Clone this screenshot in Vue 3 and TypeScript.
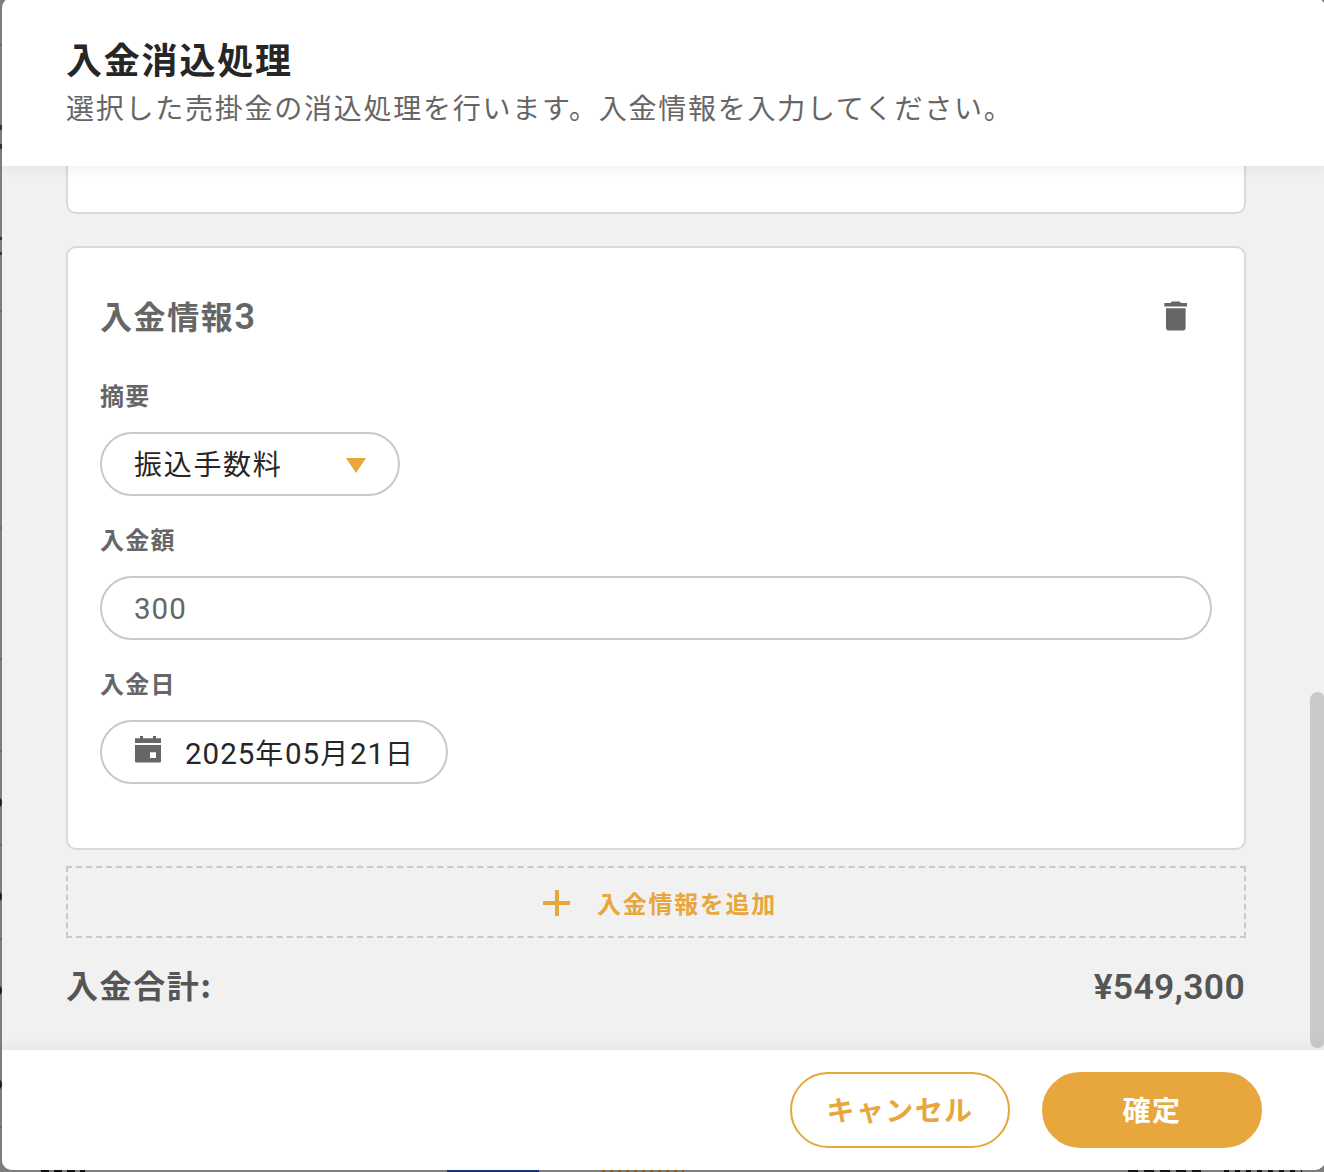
<script setup lang="ts">
import { ref } from 'vue'

interface Deposit {
  index: number
  summary: string
  amount: string
  date: string[]
}

const deposit = ref<Deposit>({
  index: 3,
  summary: '振込手数料',
  amount: '300',
  date: ['2025', '年', '05', '月', '21', '日'],
})
const total = ref('¥549,300')
const isNumeric = (part: string): boolean => /^\d+$/.test(part)
</script>

<template>
  <div class="overlay">
    <div class="behind">
      <i class="rule r1"></i><i class="rule r2"></i><i class="rule r3"></i><i class="rule r4"></i>
      <i class="rule r5"></i><i class="rule r6"></i><i class="rule r7"></i><i class="rule r8"></i>
      <i class="dot d1"></i><i class="dot d2"></i><i class="dot d3"></i><i class="dot d4"></i>
      <i class="tick t1"></i><i class="tick t2"></i><i class="tick t3"></i><i class="tick t4"></i>
      <i class="peek name"></i><i class="peek tag"></i><i class="peek gold"></i>
      <i class="peek memo"></i><i class="peek memo2"></i>
    </div>
    <section class="modal">
      <header class="head">
        <h1>入金消込処理</h1>
        <p>選択した売掛金の消込処理を行います。入金情報を入力してください。</p>
      </header>

      <main class="body">
        <div class="card previous"></div>
        <div class="card">
          <div class="card-head">
            <h2>入金情報<span class="num">{{ deposit.index }}</span></h2>
            <button class="trash" aria-label="削除">
              <svg width="24" height="30" viewBox="0 0 24 30">
                <path fill="#666" d="M.3 2H6.6L7.8 .5H15.6L17 2H23V5.5H.3ZM2 7.2H21.6V26.5Q21.6 29.6 18.6 29.6H5Q2 29.6 2 26.5Z" />
              </svg>
            </button>
          </div>
          <label>摘要</label>
          <div class="field select">
            <span>{{ deposit.summary }}</span>
            <svg width="20" height="15" viewBox="0 0 20 15"><path d="M0 0H20L10 15Z" fill="#e7a73d" /></svg>
          </div>
          <label>入金額</label>
          <div class="field amount"><span class="num">{{ deposit.amount }}</span></div>
          <label>入金日</label>
          <div class="field date">
            <svg width="26" height="27" viewBox="0 0 26 27">
              <path fill="#666" fill-rule="evenodd" d="M0 2.2H5V0H8V2.2H18V0H21V2.2H26V7H0ZM0 9H26V25.5Q26 26.5 25 26.5H1Q0 26.5 0 25.5ZM15 16.2V22H21V16.2Z" />
            </svg>
            <span class="date-text"><span v-for="(part, i) in deposit.date" :key="i" :class="{ num: isNumeric(part) }">{{ part }}</span></span>
          </div>
        </div>

        <button class="add">
          <svg width="28" height="27" viewBox="0 0 28 27"><path d="M14 0V26M0 13H27" stroke="#e7a73d" stroke-width="4" /></svg>
          <span>入金情報を追加</span>
        </button>

        <div class="total">
          <span>入金合計:</span>
          <span class="sum">{{ total }}</span>
        </div>
        <div class="thumb"></div>
      </main>

      <footer class="foot">
        <button class="btn outline">キャンセル</button>
        <button class="btn solid">確定</button>
      </footer>
    </section>
  </div>
</template>

<style>
body {
  margin: 0;
  overflow: hidden;
}
</style>

<style scoped>
* {
  box-sizing: border-box;
}
.overlay {
  position: relative;
  width: 1324px;
  height: 1172px;
  overflow: hidden;
  background: #7d7d7d;
  font-family: 'Noto Sans CJK JP', 'Noto Sans', sans-serif;
  color: #262626;
}
.behind i {
  position: absolute;
  left: 0;
  width: 2px;
}
.rule { height: 2px; background: #6a6a6a; }
.r1 { top: 44px; }
.r2 { top: 310px; }
.r3 { top: 527px; }
.r4 { top: 658px; }
.r5 { top: 750px; }
.r6 { top: 844px; }
.r7 { top: 938px; }
.r8 { top: 1126px; }
.dot { height: 11px; border: 2px solid #222; border-left: 0; border-radius: 0 5px 5px 0; }
.behind .dot { left: -4px; width: 6px; }
.d1 { top: 797px; }
.d2 { top: 891px; }
.d3 { top: 985px; }
.d4 { top: 1079px; }
.tick { height: 5px; background: #333; }
.t1 { top: 125px; }
.t2 { top: 144px; }
.t3 { top: 237px; height: 3px; }
.t4 { top: 252px; height: 3px; }
.behind .peek { top: 1170px; height: 2px; }
.behind .name { left: 41px; width: 44px; background: repeating-linear-gradient(90deg, #111 0 8px, #7d7d7d 8px 13px); }
.behind .tag { left: 447px; width: 92px; background: #18307e; }
.behind .gold { left: 602px; width: 82px; background: repeating-linear-gradient(90deg, #7f5b20 0 3px, #7d7d7d 3px 8px); }
.behind .memo { left: 1128px; width: 73px; background: repeating-linear-gradient(90deg, #161616 0 10px, #7d7d7d 10px 16px); }
.behind .memo2 { left: 1224px; width: 78px; background: repeating-linear-gradient(90deg, #161616 0 5px, #7d7d7d 5px 11px); }

.modal {
  position: relative;
  display: flex;
  flex-direction: column;
  width: 1323px;
  height: 1172px;
  margin: -2px 0 0 2px;
  border-radius: 10px;
  overflow: hidden;
  background: #f1f1f1;
}
.head {
  position: relative;
  z-index: 1;
  flex: none;
  height: 168px;
  padding: 34px 64px 0;
  background: #fff;
  box-shadow: 0 0 16px rgba(0, 0, 0, 0.09);
}
h1 {
  margin: 0;
  font-size: 36px;
  line-height: 52px;
  letter-spacing: 1.8px;
}
.head p {
  margin: 0;
  font-size: 28px;
  line-height: 46px;
  letter-spacing: 1.75px;
  color: #666;
}
.body {
  position: relative;
  flex: none;
  height: 884px;
  padding: 0 79px 0 64px;
}
.card {
  height: 604px;
  padding: 32px;
  border: 2px solid #d9d9d9;
  border-radius: 10px;
  background: #fff;
}
.previous {
  height: 48px;
  margin-bottom: 32px;
  padding: 0;
  border-top: 0;
  border-radius: 0 0 10px 10px;
}
.card-head {
  display: flex;
  justify-content: space-between;
  align-items: center;
  height: 72px;
  padding-right: 24px;
}
h2 {
  margin: -1px 0 0;
  font-size: 32px;
  line-height: 48px;
  letter-spacing: 1.6px;
  color: #666;
}
.num {
  font-family: Roboto, sans-serif;
}
h2 .num {
  font-size: 36px;
  font-weight: 600;
  letter-spacing: 0;
}
.trash {
  display: flex;
  margin: 0;
  padding: 0;
  border: 0;
  background: none;
}
label {
  display: block;
  height: 80px;
  padding-top: 25px;
  font-size: 24px;
  font-weight: 700;
  line-height: 36px;
  letter-spacing: 1.2px;
  color: #666;
}
.field {
  display: flex;
  align-items: center;
  height: 64px;
  padding: 0 32px;
  border: 2px solid #c9c9c9;
  border-radius: 32px;
  font-size: 28px;
  line-height: 40px;
  letter-spacing: 1.7px;
}
.field .num {
  font-size: 29.5px;
  letter-spacing: 1px;
}
.select {
  width: 300px;
  justify-content: space-between;
}
.select span {
  margin-top: -2px;
}
.select svg {
  margin-top: 2px;
}
.amount {
  padding-top: 2px;
  color: #666;
}
.date {
  width: 348px;
  gap: 24px;
  padding-left: 33px;
}
.date svg {
  flex: none;
  margin-top: -6px;
}
.date-text {
  display: block;
  margin-top: 1px;
  white-space: nowrap;
}
.add {
  display: flex;
  align-items: center;
  justify-content: center;
  gap: 26px;
  width: 100%;
  height: 72px;
  margin-top: 16px;
  padding: 2px 0 0 8px;
  border: 2px dashed #c9c9c9;
  background: none;
  font: 700 24px/36px 'Noto Sans CJK JP', sans-serif;
  letter-spacing: 0.07em;
  color: #e7a73d;
}
.total {
  display: flex;
  justify-content: space-between;
  margin-top: 22px;
  font-size: 32px;
  font-weight: 700;
  line-height: 48px;
  letter-spacing: 1.6px;
  color: #555;
}
.sum {
  padding: 3px 1px 0 0;
  font-family: Roboto, sans-serif;
  font-size: 35.5px;
  font-weight: 600;
  letter-spacing: 0.3px;
}
.thumb {
  position: absolute;
  top: 526px;
  left: 1308px;
  width: 15px;
  height: 356px;
  border-radius: 8px;
  background: #c9c9c9;
}
.foot {
  position: relative;
  flex: none;
  display: flex;
  justify-content: flex-end;
  gap: 32px;
  height: 120px;
  padding: 22px 63px 0 0;
  background: #fff;
  box-shadow: 0 0 16px rgba(0, 0, 0, 0.09);
}
.btn {
  width: 220px;
  height: 76px;
  padding: 0 0 2px;
  border: 2px solid #e7a73d;
  border-radius: 38px;
  font: 700 28px/40px 'Noto Sans CJK JP', sans-serif;
  letter-spacing: 0.05em;
}
.outline {
  background: #fff;
  color: #e7a73d;
}
.solid {
  background: #e7a73d;
  color: #fff;
}
</style>
